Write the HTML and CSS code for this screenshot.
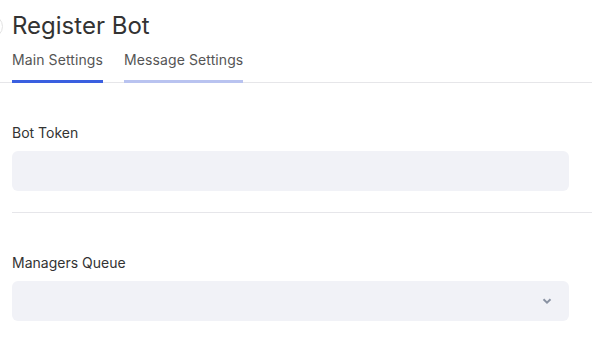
FILE: index.html
```html
<!DOCTYPE html>
<html lang="en">
<head>
    <meta charset="UTF-8">
    <meta name="viewport" content="width=device-width, initial-scale=1.0">
    <title>Register Bot</title>
    <link rel="stylesheet" href="styles.css">
</head>
<body>
    <div class="page">
        <div class="header">
            <button class="back"></button>
            <h1>Register Bot</h1>
        </div>

        <div class="tabs">
            <div class="tab active">Main Settings</div>
            <div class="tab">Message Settings</div>
        </div>

        <div class="form">
            <div class="field">
                <label>Bot Token</label>
                <input type="text" class="input">
            </div>

            <div class="divider"></div>

            <div class="field">
                <label>Managers Queue</label>
                <div class="select">
                    <svg width="10" height="6" viewBox="0 0 10 6">
                        <path d="M1.5 1.2 L5 4.6 L8.5 1.2" fill="none" stroke="#8a93a3" stroke-width="2"/>
                    </svg>
                </div>
            </div>
        </div>
    </div>
</body>
</html>
```

FILE: styles.css
```css
body {
    margin: 0;
    background: #fff;
    color: #333;
    font-family: Inter, 'Noto Sans', sans-serif;
}
.page {
    padding-top: 11px;
}
.header {
    display: flex;
    align-items: center;
    gap: 9px;
    padding-left: 12px;
    margin-left: -32px;
}
.back {
    width: 23px;
    height: 23px;
    box-sizing: border-box;
    border: 1px solid #e3e3e3;
    border-radius: 50%;
    background: #fff;
    padding: 0;
}
h1 {
    margin: 0;
    font-size: 24px;
    font-weight: 400;
    line-height: 30px;
    color: #333;
}
.tabs {
    display: flex;
    gap: 21px;
    padding: 0 12px;
    margin-top: 9px;
    border-bottom: 1px solid #e6e6e9;
}
.tab {
    font-size: 14px;
    color: #555;
    line-height: 20px;
    letter-spacing: 0.1px;
    padding-bottom: 10px;
    border-bottom: 3px solid #b9c3f0;
    margin-bottom: -1px;
}
.tab.active {
    border-bottom-color: #3a5fe0;
}
.form {
    padding: 0 0 0 12px;
}
.field {
    padding-top: 40px;
}
label {
    display: block;
    font-size: 14px;
    line-height: 20px;
    color: #333;
    margin-bottom: 8px;
}
.input,
.select {
    display: block;
    box-sizing: border-box;
    width: 557px;
    height: 40px;
    border: none;
    border-radius: 6px;
    background: #f1f2f7;
    margin: 0;
}
.select {
    display: flex;
    align-items: center;
    justify-content: flex-end;
    padding-right: 17px;
}
.divider {
    height: 1px;
    background: #e6e6ea;
    margin-top: 21px;
}
```
